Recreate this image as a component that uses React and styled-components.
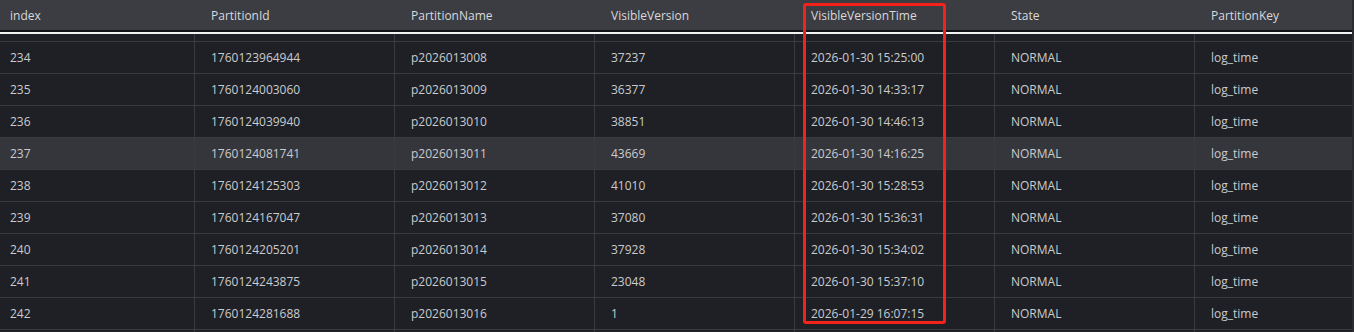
import React from 'react';
import styled, { createGlobalStyle } from 'styled-components';

const columns = ['index', 'PartitionId', 'PartitionName', 'VisibleVersion', 'VisibleVersionTime', 'State', 'PartitionKey'];

const rows = [
  ['234', '1760123964944', 'p2026013008', '37237', '2026-01-30 15:25:00', 'NORMAL', 'log_time'],
  ['235', '1760124003060', 'p2026013009', '36377', '2026-01-30 14:33:17', 'NORMAL', 'log_time'],
  ['236', '1760124039940', 'p2026013010', '38851', '2026-01-30 14:46:13', 'NORMAL', 'log_time'],
  ['237', '1760124081741', 'p2026013011', '43669', '2026-01-30 14:16:25', 'NORMAL', 'log_time'],
  ['238', '1760124125303', 'p2026013012', '41010', '2026-01-30 15:28:53', 'NORMAL', 'log_time'],
  ['239', '1760124167047', 'p2026013013', '37080', '2026-01-30 15:36:31', 'NORMAL', 'log_time'],
  ['240', '1760124205201', 'p2026013014', '37928', '2026-01-30 15:34:02', 'NORMAL', 'log_time'],
  ['241', '1760124243875', 'p2026013015', '23048', '2026-01-30 15:37:10', 'NORMAL', 'log_time'],
  ['242', '1760124281688', 'p2026013016', '1', '2026-01-29 16:07:15', 'NORMAL', 'log_time'],
];

// row 237 is the hovered one
const hoveredIndex = 3;

const App = () => {
  return (
    <>
      <GlobalStyle />
      <Frame>
        <HeaderRow>
          {columns.map((col) => (
            <HeaderCell key={col}>{col}</HeaderCell>
          ))}
        </HeaderRow>

        <Body>
          {/* partially scrolled-out row above */}
          <Row $height={8}>
            {columns.map((col) => (
              <Cell key={col} />
            ))}
          </Row>

          {rows.map((row, i) => (
            <Row key={row[0]} $hovered={i === hoveredIndex}>
              {row.map((value, j) => (
                <Cell key={columns[j]}>{value}</Cell>
              ))}
            </Row>
          ))}

          <Row $height={3}>
            {columns.map((col) => (
              <Cell key={col} />
            ))}
          </Row>
        </Body>

        {/* annotation around the VisibleVersionTime column */}
        <Highlight />
      </Frame>
    </>
  );
};

const GlobalStyle = createGlobalStyle`
  html, body {
    margin: 0;
    padding: 0;
    background: #1f2025;
    overflow: hidden;
  }

  * {
    box-sizing: border-box;
  }
`;

const Frame = styled.div`
  position: relative;
  width: 1354px;
  height: 332px;
  overflow: hidden;
  background: #1f2025;
  font-family: 'Open Sans', 'Noto Sans', sans-serif;
  font-size: 12px;
  border-right: 2px solid #2b2c31;
`;

const grid = `
  display: grid;
  grid-template-columns: 195px repeat(5, 200px) 1fr;
`;

const HeaderRow = styled.div`
  ${grid}
  height: 34px;
  background: #3c3d43;
  border-bottom: 2px solid #f2f2f2;
  box-shadow: inset 0 -2px 0 #111216;
  padding-bottom: 2px;
`;

const HeaderCell = styled.div`
  display: flex;
  align-items: center;
  padding: 0 16px;
  color: #d8d9dc;
  white-space: nowrap;

  &:first-child {
    padding-left: 10px;
  }
`;

const Body = styled.div`
  display: flex;
  flex-direction: column;
`;

const Row = styled.div`
  ${grid}
  height: ${(p) => p.$height || 32}px;
  flex-shrink: 0;
  background: ${(p) => (p.$hovered ? '#35363c' : 'transparent')};
  border-bottom: 1px solid #3a3b40;
`;

const Cell = styled.div`
  display: flex;
  align-items: center;
  padding: 0 16px;
  color: #cacbce;
  white-space: nowrap;
  border-right: 1px solid #3a3b40;

  &:first-child {
    padding-left: 10px;
  }

  &:last-child {
    border-right: none;
  }
`;

const Highlight = styled.div`
  position: absolute;
  left: 803px;
  top: 3px;
  width: 143px;
  height: 321px;
  border: 3px solid #f5221b;
  border-radius: 3px;
  pointer-events: none;
`;

export default App;
